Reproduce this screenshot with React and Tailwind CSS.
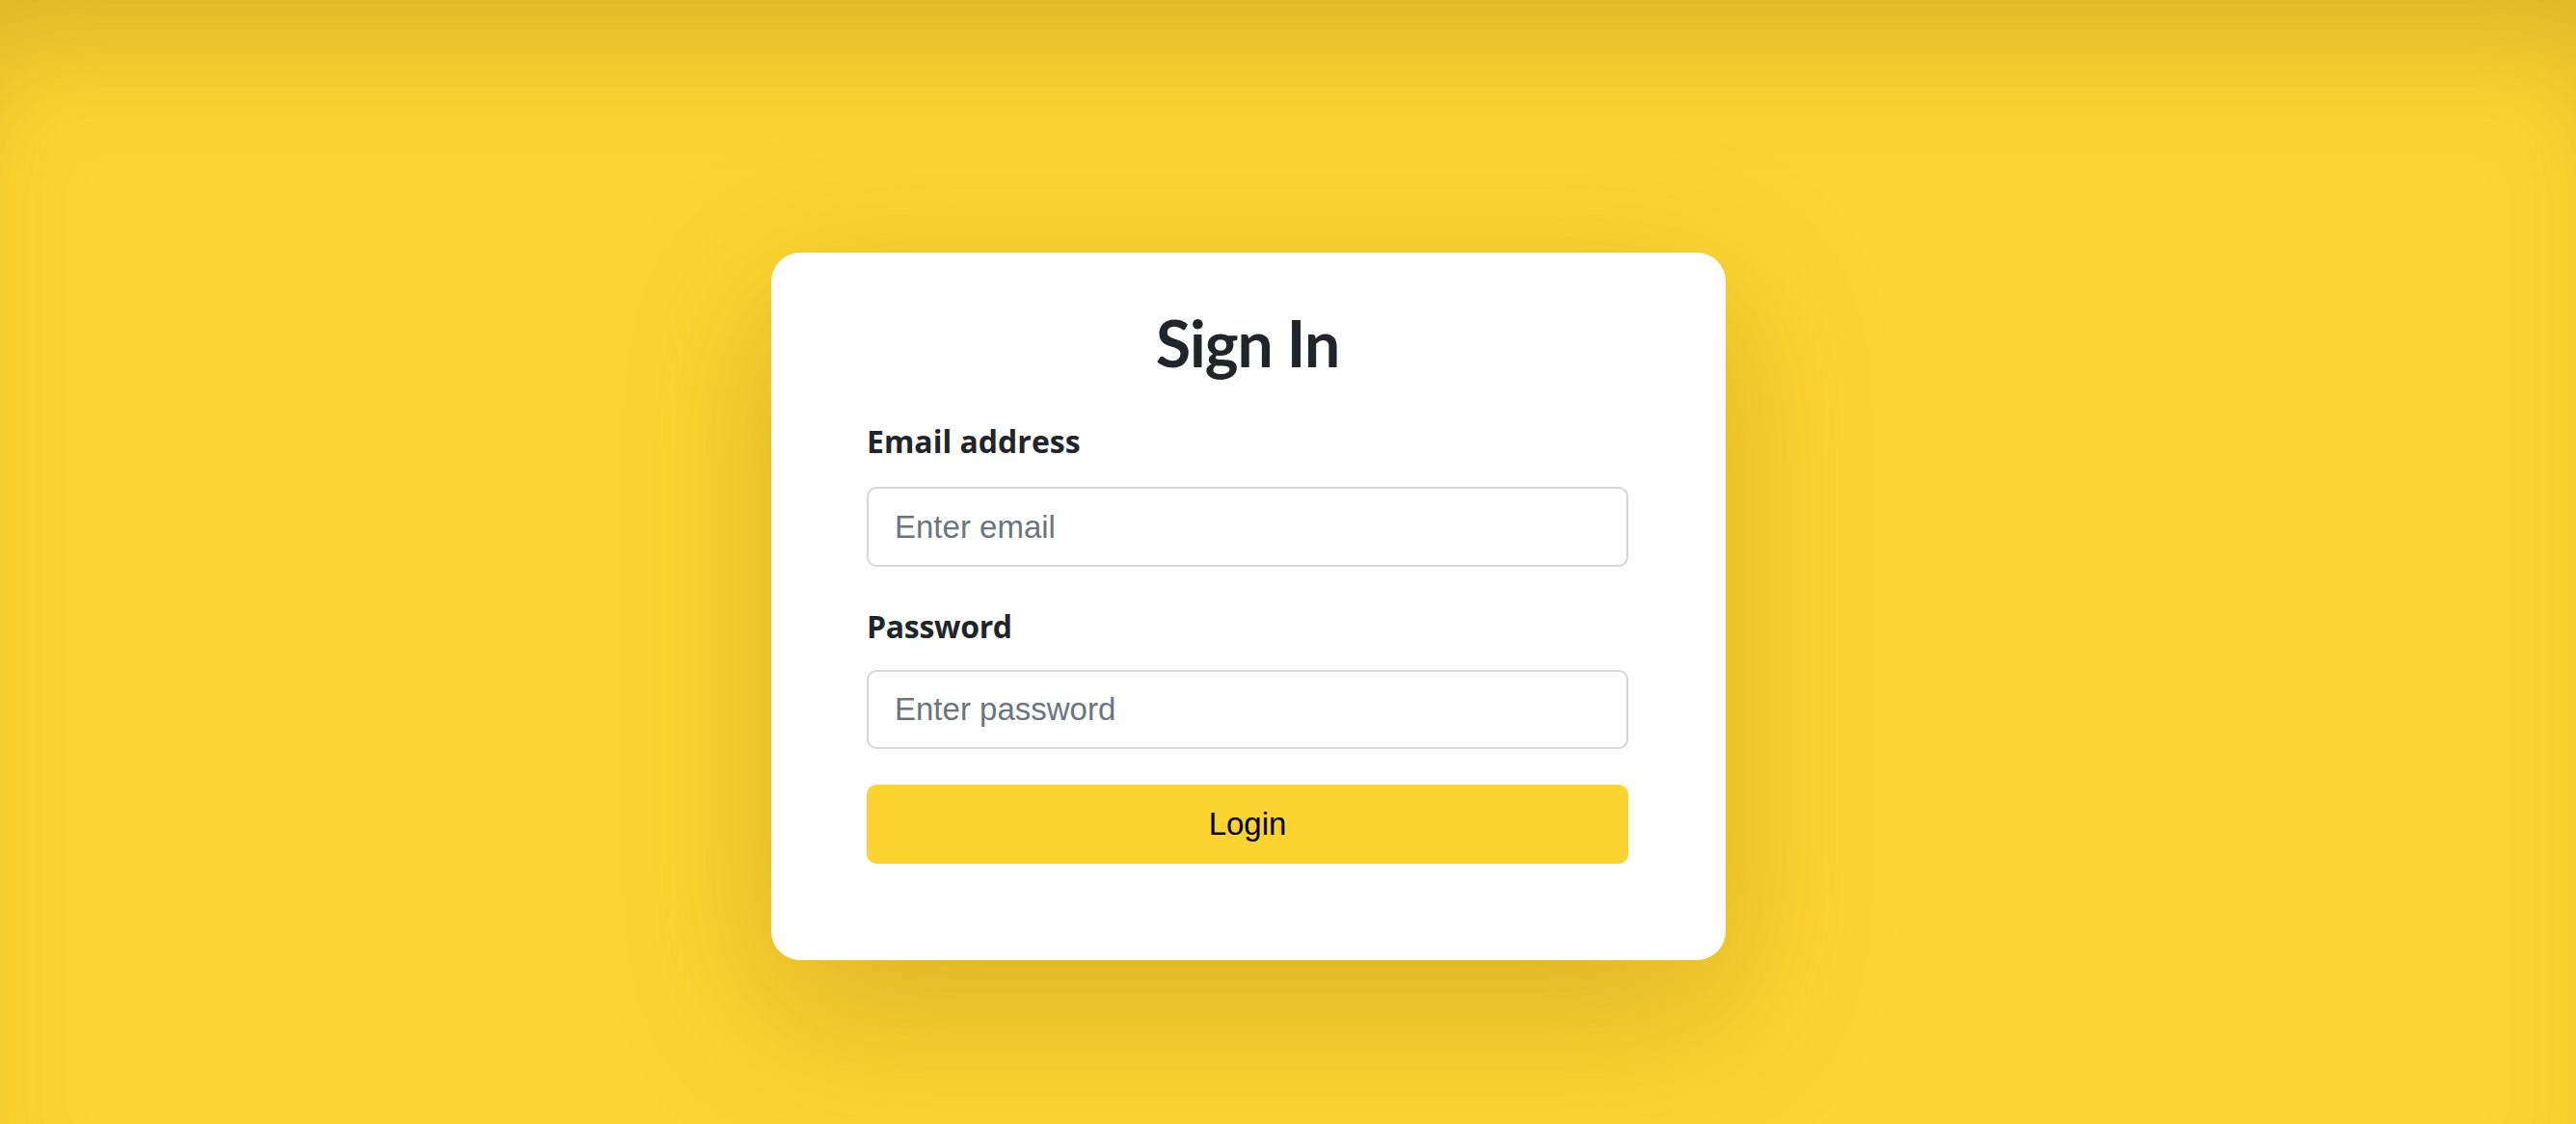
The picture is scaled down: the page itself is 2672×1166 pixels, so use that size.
import React from 'react';

const App = () => {
    return (
        <div className="relative min-h-[1166px] w-full bg-[#fed532] shadow-[inset_0_90px_130px_-50px_rgba(120,90,0,0.28)] pl-[800px] pt-[262px]">
            <div className="w-[990px] bg-white rounded-[30px] pt-[54px] pb-[100px] pl-[99px] pr-[101px] shadow-[0_50px_160px_10px_rgba(120,90,0,0.26)]">
                <h2 className="text-center text-[66px] leading-[80px] font-bold text-[#212529] font-['Lato',sans-serif] tracking-[-1px]">
                    Sign In
                </h2>

                <form className="mt-[42px] flex flex-col" onSubmit={(e) => e.preventDefault()}>
                    <label className="text-[32px] leading-[40px] font-bold text-[#212529] font-['Open_Sans',sans-serif]">
                        Email address
                    </label>
                    <input
                        type="email"
                        placeholder="Enter email"
                        className="mt-[27px] h-[83px] w-full rounded-[10px] border-2 border-[#d3d7dc] bg-white px-[27px] text-[33px] text-[#212529] placeholder:text-[#6c757d] font-['Liberation_Sans',Arial,sans-serif] outline-none"
                    />

                    <label className="mt-[42px] text-[32px] leading-[40px] font-bold text-[#212529] font-['Open_Sans',sans-serif] tracking-[-0.3px]">
                        Password
                    </label>
                    <input
                        type="password"
                        placeholder="Enter password"
                        className="mt-[25px] h-[82px] w-full rounded-[10px] border-2 border-[#d3d7dc] bg-white px-[27px] text-[33px] text-[#212529] placeholder:text-[#6c757d] font-['Liberation_Sans',Arial,sans-serif] outline-none"
                    />

                    <button
                        type="submit"
                        className="mt-[37px] h-[82px] w-full rounded-[10px] bg-[#fdd32f] text-[33px] text-black font-['Liberation_Sans',Arial,sans-serif]"
                    >
                        Login
                    </button>
                </form>
            </div>
        </div>
    );
};

export default App;
